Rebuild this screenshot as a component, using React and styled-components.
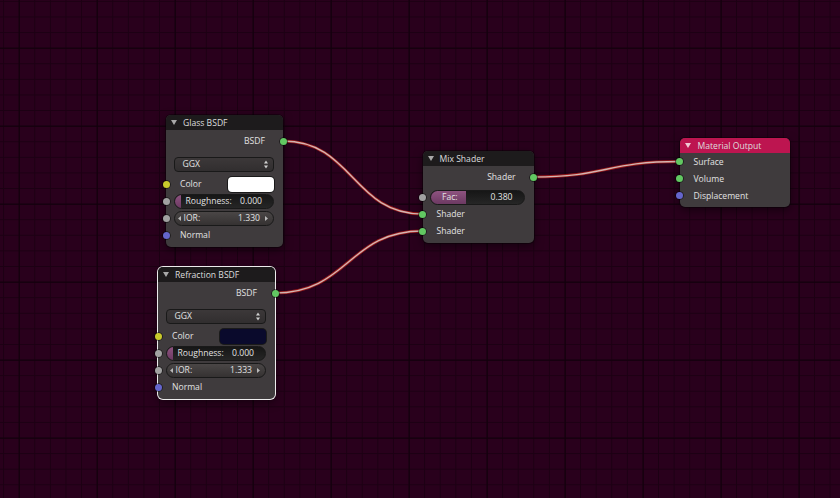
import React from "react"
import styled, { createGlobalStyle } from "styled-components"

const GlobalStyle = createGlobalStyle`
  html, body {
    margin: 0;
    padding: 0;
    background: #29001c;
  }
`

const colors = {
  green: "#62c862",
  grey: "#a2a2a2",
  yellow: "#c9c92c",
  blue: "#6565cc",
  text: "#e2e2e2",
  nodeBody: "#3f3b3d",
  darkHeader: "#1d1b1c",
  outputHeader: "#bd1550",
}

const Canvas = styled.div`
  position: relative;
  width: 840px;
  height: 498px;
  overflow: hidden;
  font-family: "Open Sans", "DejaVu Sans", sans-serif;
  font-size: 8.6px;
  color: ${colors.text};
  background-color: #29001c;
  background-image: linear-gradient(to right, #11000b 1px, transparent 1px),
    linear-gradient(to bottom, #11000b 1px, transparent 1px),
    linear-gradient(to right, #1c0013 1px, transparent 1px),
    linear-gradient(to bottom, #1c0013 1px, transparent 1px);
  background-size: 78px 78px, 78px 78px, 15.6px 15.6px, 15.6px 15.6px;
  background-position: 18.7px 0, 0 47.7px, 3.1px 0, 0 0.9px;
`

const Links = styled.svg`
  position: absolute;
  left: 0;
  top: 0;
`

const Node = styled.div`
  position: absolute;
  left: ${p => p.$x}px;
  top: ${p => p.$y}px;
  width: ${p => p.$w}px;
  background: ${colors.nodeBody};
  border-radius: 5px;
  box-shadow: ${p =>
    p.$selected
      ? "0 0 0 1px #ececec, 0 3px 10px rgba(0, 0, 0, 0.5)"
      : "0 0 0 1px rgba(0, 0, 0, 0.35), 0 3px 10px rgba(0, 0, 0, 0.5)"};
`

const Header = styled.div`
  height: 15px;
  display: flex;
  align-items: center;
  padding-left: 5px;
  border-radius: 5px 5px 0 0;
  background: ${p => p.$color || colors.darkHeader};
  color: #dedede;
  white-space: nowrap;
`

const Toggle = styled.span`
  width: 0;
  height: 0;
  border-left: 3px solid transparent;
  border-right: 3px solid transparent;
  border-top: 5px solid ${p => p.$color || "#a8a8a8"};
  margin-right: ${p => p.$gap || 6}px;
`

const Body = styled.div`
  padding: ${p => p.$pad ?? 2.5}px 0 3px;
  display: flex;
  flex-direction: column;
`

const Row = styled.div`
  position: relative;
  height: 17px;
  display: flex;
  align-items: center;
  justify-content: ${p => (p.$out ? "flex-end" : "space-between")};
  padding: ${p => (p.$out ? "0 18px 0 0" : "0 0 0 14px")};
  margin-top: ${p => p.$mt || 0}px;
  white-space: nowrap;
`

const WidgetRow = styled(Row)`
  padding: 0 9px 0 7.5px;
`

const Socket = styled.span`
  position: absolute;
  top: 50%;
  ${p => (p.$out ? "right: -3.5px;" : "left: -3.5px;")}
  width: 7px;
  height: 7px;
  margin-top: -3.5px;
  border-radius: 50%;
  background: ${p => p.$color};
  box-shadow: 0 0 0 0.8px rgba(0, 0, 0, 0.6);
`

const Swatch = styled.span`
  width: 46px;
  height: 15px;
  margin-right: 9.5px;
  border-radius: 4px;
  background: ${p => p.$color};
  box-shadow: 0 0 0 1px #1a1a1a;
`

const Field = styled.div`
  flex: 1;
  min-width: 0;
  height: 15px;
  box-sizing: border-box;
  display: flex;
  align-items: center;
  border: 1px solid #191919;
  border-radius: ${p => p.$radius || 7.5}px;
  overflow: hidden;
  position: relative;
`

const Dropdown = styled(Field)`
  background: linear-gradient(#3c3839, #312e2f);
  padding: 0 5px 0 8px;
  justify-content: space-between;
`

const Slider = styled(Field)`
  background: linear-gradient(#161616, #262626);
  padding: 0 11px 0 11px;
  justify-content: space-between;
`

const SliderFill = styled.span`
  position: absolute;
  left: 0;
  top: 0;
  bottom: 0;
  width: ${p => p.$w};
  min-width: 6px;
  background: linear-gradient(#8e5380, #6c3962);
`

const SliderText = styled.span`
  position: relative;
`

const NumberField = styled(Field)`
  background: linear-gradient(#4a4646, #353232);
  padding: 0 5px 0 3px;
  svg {
    flex-shrink: 0;
  }
`

const NumberLabel = styled.span`
  flex: 1;
  margin-left: 3px;
`

const NumberValue = styled.span`
  margin-right: 5px;
`

const Arrow = ({ dir }) => (
  <svg width="3" height="5" viewBox="0 0 3 5">
    <polygon
      points={dir === "left" ? "3,0 0,2.5 3,5" : "0,0 3,2.5 0,5"}
      fill="#b9b9b9"
    />
  </svg>
)

const UpDown = () => (
  <svg width="4" height="9" viewBox="0 0 4 9">
    <polygon points="0,3.5 2,0.5 4,3.5" fill="#cfcfcf" />
    <polygon points="0,5.5 2,8.5 4,5.5" fill="#cfcfcf" />
  </svg>
)

const link = (x1, y1, x2, y2) => {
  const h = Math.abs(x2 - x1) * 0.5
  return `M${x1},${y1} C${x1 + h},${y1} ${x2 - h},${y2} ${x2},${y2}`
}

const LINKS = [
  link(283, 141, 422.5, 214),
  link(274.5, 293, 422.5, 231),
  link(533.5, 177, 679.5, 161.5),
]

const BsdfNode = ({ title, x, y, color, ior, selected }) => (
  <Node $x={x} $y={y} $w={117} $selected={selected}>
    <Header>
      <Toggle />
      {title}
    </Header>
    <Body>
      <Row $out>
        BSDF
        <Socket $out $color={colors.green} />
      </Row>
      <WidgetRow $mt={6}>
        <Dropdown $radius={4}>
          <span>GGX</span>
          <UpDown />
        </Dropdown>
      </WidgetRow>
      <Row $mt={3}>
        <Socket $color={colors.yellow} />
        Color
        <Swatch $color={color} />
      </Row>
      <WidgetRow>
        <Socket $color={colors.grey} />
        <Slider>
          <SliderFill $w="0%" />
          <SliderText>Roughness:</SliderText>
          <SliderText>0.000</SliderText>
        </Slider>
      </WidgetRow>
      <WidgetRow>
        <Socket $color={colors.grey} />
        <NumberField>
          <Arrow dir="left" />
          <NumberLabel>IOR:</NumberLabel>
          <NumberValue>{ior}</NumberValue>
          <Arrow dir="right" />
        </NumberField>
      </WidgetRow>
      <Row>
        <Socket $color={colors.blue} />
        Normal
      </Row>
    </Body>
  </Node>
)

export default function App() {
  return (
    <>
      <GlobalStyle />
      <Canvas>
        <Links width="840" height="498">
          {LINKS.map((d, i) => (
            <g key={i} fill="none">
              <path d={d} stroke="#9c1a1a" strokeWidth="3" />
              <path d={d} stroke="#d2b6b2" strokeWidth="1.3" />
            </g>
          ))}
        </Links>

        <BsdfNode title="Glass BSDF" x={166} y={115} color="#ffffff" ior="1.330" />
        <BsdfNode
          title="Refraction BSDF"
          x={158}
          y={267}
          color="#0a0a2c"
          ior="1.333"
          selected
        />

        <Node $x={422.5} $y={151} $w={111}>
          <Header>
            <Toggle />
            Mix Shader
          </Header>
          <Body>
            <Row $out>
              Shader
              <Socket $out $color={colors.green} />
            </Row>
            <WidgetRow $mt={3}>
              <Socket $color={colors.grey} />
              <Slider>
                <SliderFill $w="38%" />
                <SliderText>Fac:</SliderText>
                <SliderText>0.380</SliderText>
              </Slider>
            </WidgetRow>
            <Row>
              <Socket $color={colors.green} />
              Shader
            </Row>
            <Row>
              <Socket $color={colors.green} />
              Shader
            </Row>
          </Body>
        </Node>

        <Node $x={679.5} $y={138} $w={110}>
          <Header $color={colors.outputHeader}>
            <Toggle $color="#f0c8d4" $gap={7} />
            Material Output
          </Header>
          <Body $pad={0}>
            <Row>
              <Socket $color={colors.green} />
              Surface
            </Row>
            <Row>
              <Socket $color={colors.green} />
              Volume
            </Row>
            <Row>
              <Socket $color={colors.blue} />
              Displacement
            </Row>
          </Body>
        </Node>
      </Canvas>
    </>
  )
}
